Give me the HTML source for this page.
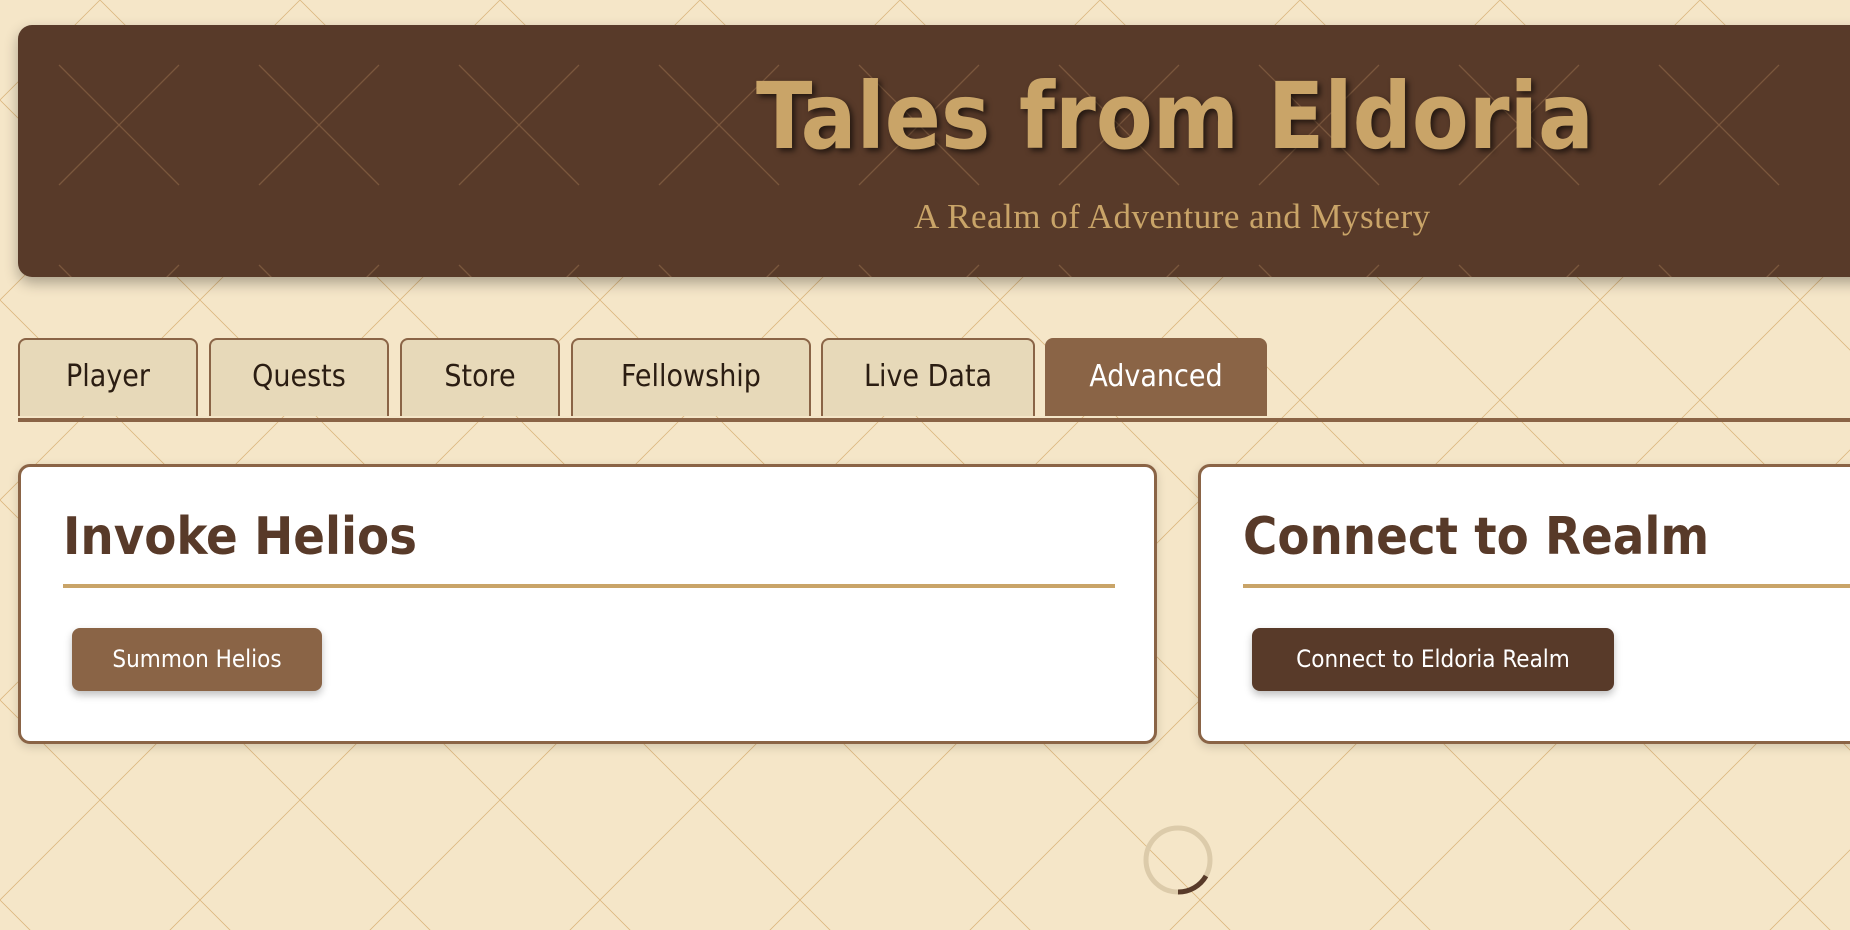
<!DOCTYPE html>
<html><head><meta charset="utf-8"><style>
html,body{margin:0;padding:0;}
body{width:1850px;height:930px;overflow:hidden;background-color:#f5e6c8;font-family:"Liberation Sans",sans-serif;position:relative;
background-image:url("data:image/svg+xml;utf8,<svg xmlns='http://www.w3.org/2000/svg' width='200' height='200'><path d='M0 100L100 0L200 100L100 200Z' stroke='%23d4aa6a' stroke-width='0.8' fill='none' opacity='0.8'/></svg>");}
.header{position:absolute;left:18px;top:25px;width:1900px;height:252px;background:#583a29;border-radius:14px;box-shadow:0 6px 14px rgba(0,0,0,.3);overflow:hidden;}
.header svg{position:absolute;left:0;top:0;}
.title{position:absolute;left:738px;top:38px;font-size:92px;font-weight:bold;color:#c9a468;font-family:"DejaVu Sans Condensed","Liberation Sans",sans-serif;text-shadow:3px 3px 6px rgba(0,0,0,.6);white-space:nowrap;}
.sub{position:absolute;left:896px;top:172px;font-size:35px;color:#c9a468;font-family:"Liberation Serif",serif;white-space:nowrap;letter-spacing:0.5px;}
.tabs{position:absolute;left:18px;top:338px;}
.tab{position:absolute;top:0;height:78px;background:#e7d9b9;border:2px solid #8a6446;border-bottom:none;border-radius:8px 8px 0 0;box-sizing:border-box;font-size:30px;color:#2b1d12;text-align:center;line-height:74px;font-family:"DejaVu Sans Condensed",sans-serif;}
.tab.active{background:#8a6446;color:#fff;}
.line{position:absolute;left:18px;top:418px;width:1832px;height:4px;background:#8a6446;}
.card{position:absolute;top:464px;height:280px;background:#fff;border:3px solid #8a6446;border-radius:12px;box-sizing:border-box;box-shadow:0 3px 10px rgba(0,0,0,.15);}
.card h2{position:absolute;left:42px;top:40px;margin:0;font-weight:bold;font-size:52px;color:#583a29;font-family:"DejaVu Sans Condensed",sans-serif;}
.card .gl{position:absolute;left:42px;top:117px;height:4px;background:#c9a468;}
.btn{position:absolute;left:51px;top:161px;height:63px;border-radius:8px;color:#fff;font-size:24px;line-height:62px;text-align:center;font-family:"DejaVu Sans Condensed",sans-serif;box-shadow:0 4px 8px rgba(0,0,0,.25);}
</style></head><body>
<div class="header">
<svg width="1900" height="252"><g stroke="#8a6446" stroke-width="1.3" opacity="0.7">
<path d="M41 40L161 160M161 40L41 160M241 40L361 160M361 40L241 160M441 40L561 160M561 40L441 160M641 40L761 160M761 40L641 160M841 40L961 160M961 40L841 160M1041 40L1161 160M1161 40L1041 160M1241 40L1361 160M1361 40L1241 160M1441 40L1561 160M1561 40L1441 160M1641 40L1761 160M1761 40L1641 160"/>
<path d="M41 240L61 260M161 240L141 260M241 240L261 260M361 240L341 260M441 240L461 260M561 240L541 260M641 240L661 260M761 240L741 260M841 240L861 260M961 240L941 260M1041 240L1061 260M1161 240L1141 260M1241 240L1261 260M1361 240L1341 260M1441 240L1461 260M1561 240L1541 260M1641 240L1661 260M1761 240L1741 260"/></g></svg>
<div class="title">Tales from Eldoria</div>
<div class="sub">A Realm of Adventure and Mystery</div>
</div>
<div class="tabs">
<div class="tab" style="left:0;width:180px">Player</div>
<div class="tab" style="left:191px;width:180px">Quests</div>
<div class="tab" style="left:382px;width:160px">Store</div>
<div class="tab" style="left:553px;width:240px">Fellowship</div>
<div class="tab" style="left:803px;width:214px">Live Data</div>
<div class="tab active" style="left:1027px;width:222px">Advanced</div>
</div>
<div class="line"></div>
<div class="card" style="left:18px;width:1139px"><h2>Invoke Helios</h2><div class="gl" style="width:1052px"></div><div class="btn" style="width:250px;background:#8a6446">Summon Helios</div></div>
<div class="card" style="left:1198px;width:800px"><h2>Connect to Realm</h2><div class="gl" style="width:760px"></div><div class="btn" style="width:362px;background:#583a29">Connect to Eldoria Realm</div></div>
<svg style="position:absolute;left:1140px;top:822px" width="76" height="76"><circle cx="38" cy="38" r="32" fill="none" stroke="#dccbaa" stroke-width="5"/><path d="M38 70A32 32 0 0 0 66 54" fill="none" stroke="#583a29" stroke-width="5"/></svg>
</body></html>
